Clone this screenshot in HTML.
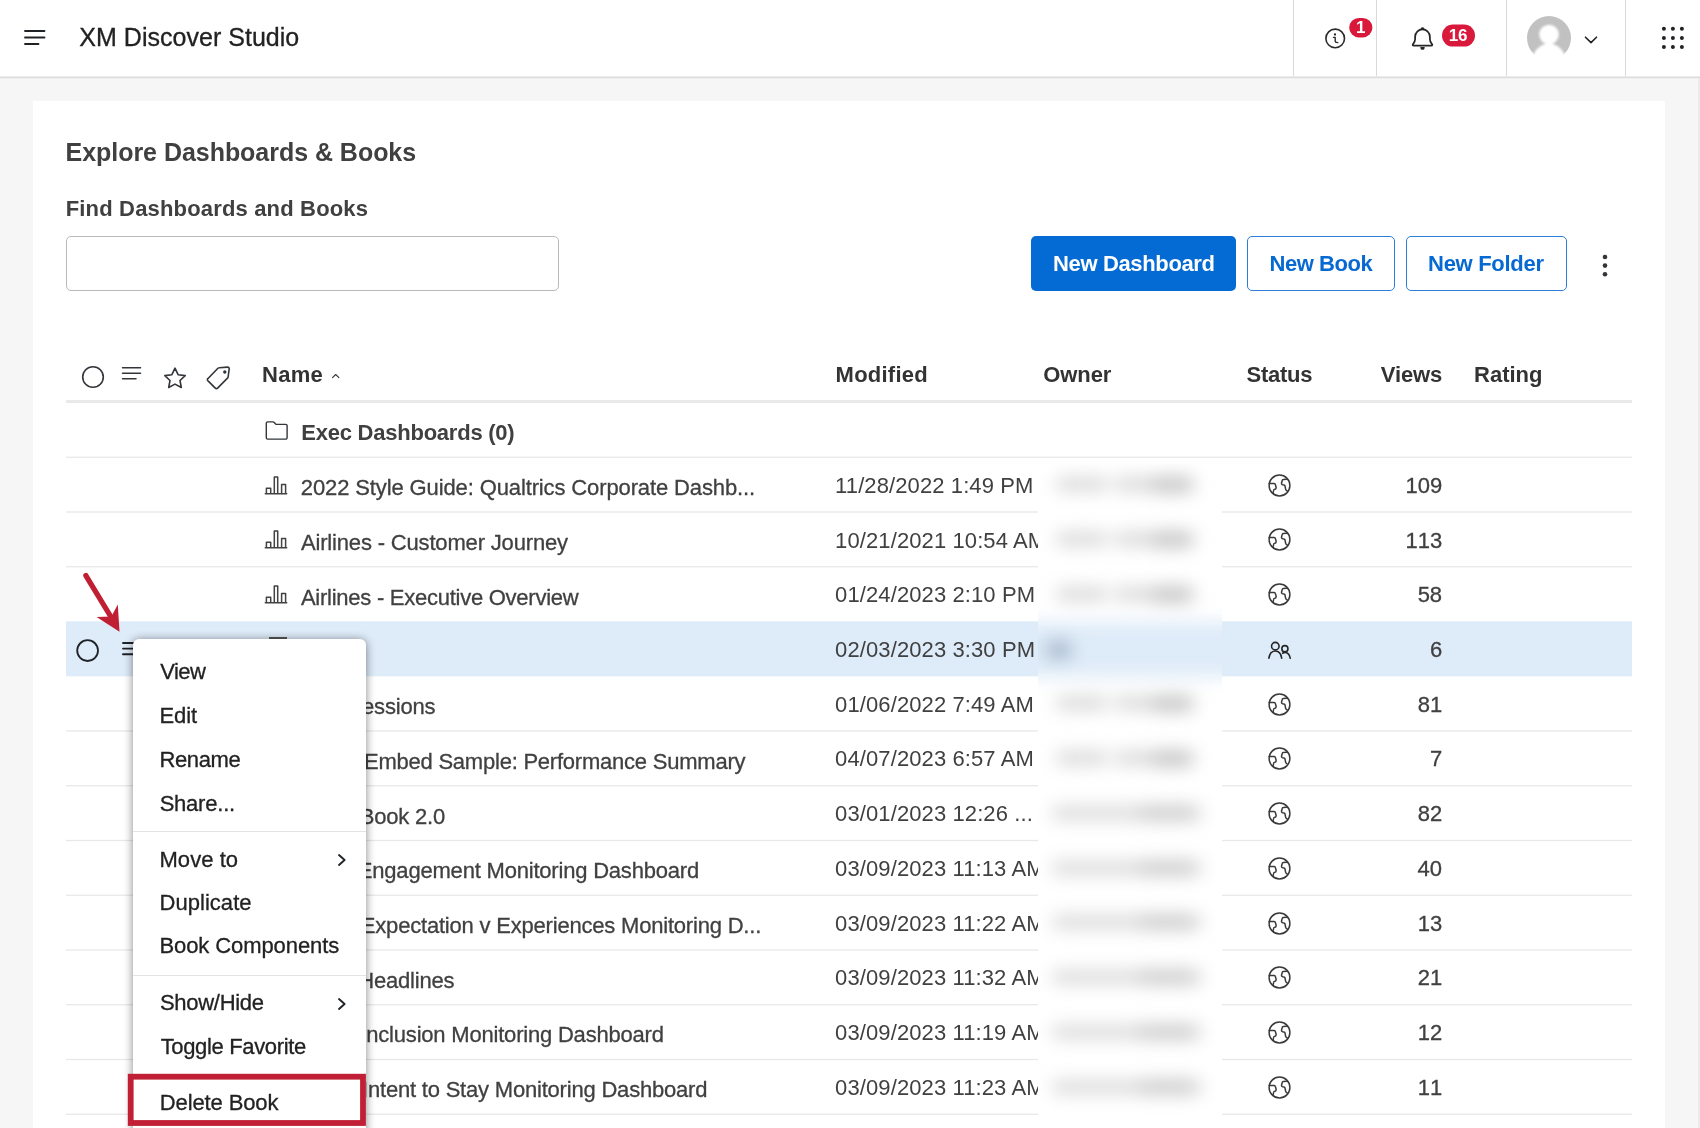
<!DOCTYPE html>
<html>
<head>
<meta charset="utf-8">
<title>XM Discover Studio</title>
<style>
*{box-sizing:border-box;margin:0;padding:0}
html,body{width:1700px;height:1128px;overflow:hidden;background:#f6f6f6;font-family:"Liberation Sans",sans-serif;color:#32363a}
#root{position:absolute;left:0;top:0;width:1700px;height:1128px;overflow:hidden;opacity:.999}
.abs{position:absolute}
.t{position:absolute;white-space:nowrap;line-height:1;color:#404040}
.th{color:#333}
.nm,.mi,.vw,.ap{-webkit-text-stroke:0.3px currentColor}
.b.nm{-webkit-text-stroke:0}
.b{font-weight:bold}
#hdr{position:absolute;left:0;top:0;width:1700px;height:79px;background:#fff;border-bottom:1px solid #f0f0f0}
#hdr:after{content:'';position:absolute;left:0;top:76px;width:1700px;height:2px;background:linear-gradient(#ececec 0,#ececec 50%,#dcdcdc 50%,#dcdcdc 100%)}
.vsep{position:absolute;top:0;width:1px;height:76px;background:#d9d9d9}
#card{position:absolute;left:33px;top:101px;width:1632px;height:1027px;background:#fff}
.rowline{position:absolute;left:66px;width:1566px;height:1px;background:#e7e7e7}
.btn{position:absolute;top:236px;height:55px;border-radius:5px}
.ic{position:absolute;overflow:visible}
</style>
</head>
<body>
<div id="root">
<div id="hdr"></div>
<svg class="ic" style="left:22px;top:28px" width="26" height="20" viewBox="0 0 26 20"><g stroke="#1f2226" stroke-width="1.8" stroke-linecap="round"><line x1="3" y1="3" x2="22.5" y2="3"/><line x1="3" y1="9.5" x2="22.5" y2="9.5"/><line x1="3" y1="16" x2="16.5" y2="16"/></g></svg>

<div class="t ap" id="apptitle" style="left:79.31px;top:25px;font-size:25px;letter-spacing:0.024px;color:#222;">XM Discover Studio</div>
<div class="vsep" style="left:1293px"></div>
<div class="vsep" style="left:1376px"></div>
<div class="vsep" style="left:1506px"></div>
<div class="vsep" style="left:1625px"></div>
<svg class="ic" style="left:1320px;top:14px" width="60" height="40" viewBox="0 0 60 40">
<circle cx="15.200" cy="24.400" r="9.300" fill="none" stroke="#2a2a2a" stroke-width="1.600"/>
<circle cx="15" cy="20.500" r="1.150" fill="#2a2a2a"/>
<path d="M13.500 23.400H15.200V27Q15.300 28.500 17.800 28.600" fill="none" stroke="#2a2a2a" stroke-width="1.400" stroke-linecap="round" stroke-linejoin="round"/>
<rect x="29.200" y="4" width="23.200" height="19.400" rx="9.700" fill="#d9193c"/>
</svg>
<div class="t b" id="b1" style="left:1355.90px;top:19px;font-size:17px;color:#fff;">1</div>
<svg class="ic" style="left:1408px;top:22px" width="70" height="32" viewBox="0 0 70 32">
<path d="M7.100 14.700A7.400 7.300 0 0 1 21.900 14.700V17.200C21.900 19.500 22.700 20.600 24 22.200C24.700 23 24.100 23.600 23.300 23.600H5.700C4.900 23.600 4.300 23 5 22.200C6.300 20.600 7.100 19.500 7.100 17.200Z" fill="none" stroke="#262626" stroke-width="1.750" stroke-linejoin="round"/>
<path d="M12.500 7.300A2 2.100 0 0 1 16.500 7.300Z" fill="#262626"/>
<path d="M12.300 24.900H16.700A2.200 2.900 0 0 1 12.300 24.900Z" fill="#262626"/>
<rect x="34" y="2.600" width="33" height="22" rx="11" fill="#d9193c"/>
</svg>
<div class="t b" id="b16" style="left:1448.70px;top:27px;font-size:17px;letter-spacing:-0.257px;color:#fff;">16</div>
<svg class="ic" style="left:1527px;top:16px" width="44" height="46" viewBox="0 0 44 46">
<defs><clipPath id="avc"><rect x="-2" y="-2" width="48" height="48"/></clipPath><filter id="avb" x="-20%" y="-20%" width="140%" height="140%"><feGaussianBlur stdDeviation="0.9"/></filter></defs>
<circle cx="22" cy="22" r="22" fill="#c1c1c1"/>
<g filter="url(#avb)" clip-path="url(#avc)"><circle cx="22" cy="18.500" r="9.800" fill="#fff"/><ellipse cx="22" cy="46" rx="17" ry="18.500" fill="#fff"/></g>
</svg>
<svg class="ic" style="left:1583px;top:34px" width="16" height="12" viewBox="0 0 16 12"><path d="M2.500 3.200L8 8.600L13.500 3.200" fill="none" stroke="#1f2226" stroke-width="1.600" stroke-linecap="round" stroke-linejoin="round"/></svg>
<svg class="ic" style="left:0;top:0" width="1700" height="78" viewBox="0 0 1700 78" fill="#1f2226"><circle cx="1663.9" cy="28.8" r="2"/><circle cx="1663.9" cy="38" r="2"/><circle cx="1663.9" cy="47.1" r="2"/><circle cx="1672.9" cy="28.8" r="2"/><circle cx="1672.9" cy="38" r="2"/><circle cx="1672.9" cy="47.1" r="2"/><circle cx="1681.9" cy="28.8" r="2"/><circle cx="1681.9" cy="38" r="2"/><circle cx="1681.9" cy="47.1" r="2"/></svg>
<div class="abs" style="left:1698px;top:78px;width:2px;height:1050px;background:#ebebeb"></div>
<div id="card"></div>
<div class="t b" id="h1" style="left:65.52px;top:140px;font-size:25px;letter-spacing:-0.034px;color:#404040;">Explore Dashboards &amp; Books</div>
<div class="t b" id="h2" style="left:65.72px;top:198px;font-size:22px;letter-spacing:0.167px;color:#404040;">Find Dashboards and Books</div>
<div class="abs" style="left:66px;top:236px;width:493px;height:55px;border:1px solid #b9b9b9;border-radius:5px;background:#fff"></div>
<div class="btn" style="left:1031px;width:205px;background:#046ad4"></div>
<div class="btn" style="left:1247px;width:148px;border:1px solid #2b7fd8;background:#fff"></div>
<div class="btn" style="left:1406px;width:161px;border:1px solid #2b7fd8;background:#fff"></div>
<div class="t b" id="bt1" style="left:1053.02px;top:253px;font-size:22px;letter-spacing:-0.358px;color:#fff;">New Dashboard</div>
<div class="t b" id="bt2" style="left:1269.52px;top:253px;font-size:22px;letter-spacing:-0.450px;color:#076ad3;">New Book</div>
<div class="t b" id="bt3" style="left:1428.12px;top:253px;font-size:22px;letter-spacing:-0.305px;color:#076ad3;">New Folder</div>
<svg class="ic" style="left:1600px;top:252px" width="10" height="28" viewBox="0 0 10 28" fill="#32363a"><circle cx="5" cy="5" r="2.300"/><circle cx="5" cy="13.600" r="2.300"/><circle cx="5" cy="22.200" r="2.300"/></svg>
<svg class="ic" style="left:80px;top:364px" width="160" height="28" viewBox="0 0 160 28" fill="none" stroke="#32363a" stroke-width="1.600" stroke-linecap="round" stroke-linejoin="round">
<circle cx="13" cy="13" r="10.300"/>
<g stroke-width="1.500"><line x1="42.500" y1="3.800" x2="60.500" y2="3.800"/><line x1="42.500" y1="9.300" x2="60.500" y2="9.300"/><line x1="42.500" y1="14.800" x2="56" y2="14.800"/></g>
<path d="M95 4.200l3.100 6.500 7.100 0.900-5.200 4.900 1.300 7-6.300-3.400-6.300 3.400 1.300-7-5.200-4.900 7.100-0.900z"/>
<path d="M128.300 14.200l9.600-9.900a2 2 0 0 1 1.400-0.600l8.200-0.600a1.600 1.600 0 0 1 1.700 1.800l-1.100 8.100a2 2 0 0 1-0.600 1.200l-9.900 9.900a1.600 1.600 0 0 1-2.300 0l-7-7a1.600 1.600 0 0 1 0-2.900z"/>
<circle cx="144.800" cy="8" r="0.900" fill="#32363a"/>
</svg>
<div class="t b th" id="hName" style="left:262.02px;top:364px;font-size:22px;letter-spacing:0.271px;">Name</div>
<div class="t b th" id="hMod" style="left:835.58px;top:364px;font-size:22px;letter-spacing:0.241px;">Modified</div>
<div class="t b th" id="hOwn" style="left:1043.14px;top:364px;font-size:22px;letter-spacing:-0.044px;">Owner</div>
<div class="t b th" id="hSta" style="left:1246.54px;top:364px;font-size:22px;letter-spacing:-0.262px;">Status</div>
<div class="t b th" id="hVie" style="left:1380.84px;top:364px;font-size:22px;letter-spacing:-0.167px;">Views</div>
<div class="t b th" id="hRat" style="left:1474.12px;top:364px;font-size:22px;letter-spacing:-0.029px;">Rating</div>
<svg class="ic" style="left:331px;top:372px" width="10" height="8" viewBox="0 0 10 8" fill="none" stroke="#32363a" stroke-width="1.100" stroke-linecap="round" stroke-linejoin="round"><path d="M1.500 5.600L4.700 2.500L7.900 5.600"/></svg>
<div class="abs" style="left:66px;top:400px;width:1566px;height:3px;background:#e9e9e9"></div>
<svg class="ic" style="left:0;top:600px" width="1700" height="100" viewBox="0 600 1700 100"><rect x="66" y="621.350" width="1566" height="54.950" fill="#deebf8"/></svg>
<svg class="ic" style="left:0;top:0" width="1700" height="1128" viewBox="0 0 1700 1128" fill="#e8e8e8"><rect x="66" y="456.60" width="1566" height="1.300"/><rect x="66" y="511.35" width="1566" height="1.300"/><rect x="66" y="566.10" width="1566" height="1.300"/><rect x="66" y="730.35" width="1566" height="1.300"/><rect x="66" y="785.10" width="1566" height="1.300"/><rect x="66" y="839.85" width="1566" height="1.300"/><rect x="66" y="894.60" width="1566" height="1.300"/><rect x="66" y="949.35" width="1566" height="1.300"/><rect x="66" y="1004.10" width="1566" height="1.300"/><rect x="66" y="1058.85" width="1566" height="1.300"/><rect x="66" y="1113.60" width="1566" height="1.300"/></svg>
<div class="t b nm" id="n0" style="left:301.32px;top:422px;font-size:22px;letter-spacing:-0.237px;">Exec Dashboards (0)</div>
<svg class="ic" style="left:263.700px;top:419.45px" width="26" height="22" viewBox="0 0 26 22"><path d="M2.300 4.300a1.400 1.400 0 0 1 1.400-1.400h5.300a1.600 1.600 0 0 1 1.200.5l1.400 1.500a1.600 1.600 0 0 0 1.200.5h8.900a1.400 1.400 0 0 1 1.400 1.400v11.900a1.400 1.400 0 0 1-1.400 1.400h-18a1.400 1.400 0 0 1-1.400-1.400z" fill="none" stroke="#32363a" stroke-width="1.400" stroke-linejoin="round"/></svg>
<div class="t nm" id="n1" style="left:300.87px;top:477px;font-size:22px;letter-spacing:-0.122px;">2022 Style Guide: Qualtrics Corporate Dashb...</div>
<svg class="ic" style="left:263.900px;top:475.70px" width="24" height="20" viewBox="0 0 24 20"><path d="M1.300 17.800H22.700M2.400 17.800V12.300H6.700V17.800M10.300 17.800V1H13.700V17.800M17.600 17.800V8.600H21.600V17.800" fill="none" stroke="#424242" stroke-width="1.500" stroke-linejoin="round" stroke-linecap="round"/></svg>
<div class="t dt" id="d1" style="left:835.12px;top:475px;font-size:22px;letter-spacing:0.102px;">11/28/2022 1:49 PM</div>
<div class="t vw" id="v1" style="left:1405.47px;top:475px;font-size:22px;font-kerning:none;">109</div>
<svg class="ic" style="left:1268.200px;top:473.70px" width="23" height="23" viewBox="0 0 23 23"><circle cx="11.500" cy="11.500" r="10.400" fill="none" stroke="#3a3a3a" stroke-width="1.500"/><path d="M1.200 9.500H6.200Q7.200 9.500 7.400 10.500L8.100 13.300Q8.300 14.900 7 15.200L6.300 15.400Q5.800 15.500 5.700 16.200L5.100 18.900M18.600 5.300L15.200 5.500Q14.400 5.600 14.200 6.500L13.500 9.200Q13.400 10.500 14.600 10.700L16 10.900Q16.800 11 17 12L17.600 15.200Q17.800 16.200 19 16.900" fill="none" stroke="#3a3a3a" stroke-width="1.500" stroke-linecap="round" stroke-linejoin="round"/></svg>
<div class="t nm" id="n2" style="left:300.93px;top:532px;font-size:22px;letter-spacing:-0.165px;">Airlines - Customer Journey</div>
<svg class="ic" style="left:263.900px;top:530.45px" width="24" height="20" viewBox="0 0 24 20"><path d="M1.300 17.800H22.700M2.400 17.800V12.300H6.700V17.800M10.300 17.800V1H13.700V17.800M17.600 17.800V8.600H21.600V17.800" fill="none" stroke="#424242" stroke-width="1.500" stroke-linejoin="round" stroke-linecap="round"/></svg>
<div class="t dt" id="d2" style="left:835.12px;top:530px;font-size:22px;letter-spacing:0.102px;">10/21/2021 10:54 AM</div>
<div class="t vw" id="v2" style="left:1405.41px;top:530px;font-size:22px;font-kerning:none;">113</div>
<svg class="ic" style="left:1268.200px;top:528.45px" width="23" height="23" viewBox="0 0 23 23"><circle cx="11.500" cy="11.500" r="10.400" fill="none" stroke="#3a3a3a" stroke-width="1.500"/><path d="M1.200 9.500H6.200Q7.200 9.500 7.400 10.500L8.100 13.300Q8.300 14.900 7 15.200L6.300 15.400Q5.800 15.500 5.700 16.200L5.100 18.900M18.600 5.300L15.200 5.500Q14.400 5.600 14.200 6.500L13.500 9.200Q13.400 10.500 14.600 10.700L16 10.900Q16.800 11 17 12L17.600 15.200Q17.800 16.200 19 16.900" fill="none" stroke="#3a3a3a" stroke-width="1.500" stroke-linecap="round" stroke-linejoin="round"/></svg>
<div class="t nm" id="n3" style="left:300.93px;top:587px;font-size:22px;letter-spacing:-0.254px;">Airlines - Executive Overview</div>
<svg class="ic" style="left:263.900px;top:585.20px" width="24" height="20" viewBox="0 0 24 20"><path d="M1.300 17.800H22.700M2.400 17.800V12.300H6.700V17.800M10.300 17.800V1H13.700V17.800M17.600 17.800V8.600H21.600V17.800" fill="none" stroke="#424242" stroke-width="1.500" stroke-linejoin="round" stroke-linecap="round"/></svg>
<div class="t dt" id="d3" style="left:835.12px;top:584px;font-size:22px;letter-spacing:0.102px;">01/24/2023 2:10 PM</div>
<div class="t vw" id="v3" style="left:1417.63px;top:584px;font-size:22px;font-kerning:none;">58</div>
<svg class="ic" style="left:1268.200px;top:583.20px" width="23" height="23" viewBox="0 0 23 23"><circle cx="11.500" cy="11.500" r="10.400" fill="none" stroke="#3a3a3a" stroke-width="1.500"/><path d="M1.200 9.500H6.200Q7.200 9.500 7.400 10.500L8.100 13.300Q8.300 14.900 7 15.200L6.300 15.400Q5.800 15.500 5.700 16.200L5.100 18.900M18.600 5.300L15.200 5.500Q14.400 5.600 14.200 6.500L13.500 9.200Q13.400 10.500 14.600 10.700L16 10.900Q16.800 11 17 12L17.600 15.200Q17.800 16.200 19 16.900" fill="none" stroke="#3a3a3a" stroke-width="1.500" stroke-linecap="round" stroke-linejoin="round"/></svg>
<div class="t dt" id="d4" style="left:835.12px;top:639px;font-size:22px;letter-spacing:0.102px;">02/03/2023 3:30 PM</div>
<div class="t vw" id="v4" style="left:1429.90px;top:639px;font-size:22px;font-kerning:none;">6</div>
<svg class="ic" style="left:1268px;top:641.55px" width="24" height="18" viewBox="0 0 24 18"><g fill="none" stroke="#262626" stroke-width="1.600" stroke-linecap="round"><circle cx="7.300" cy="4.150" r="3.750"/><path d="M0.900 16.250C1.600 11.500 4.400 9.050 7.300 9.050S13 11.500 13.700 16.250"/><circle cx="16.900" cy="6.650" r="3.050"/><path d="M14.600 11.250C15.500 10.600 16.400 10.400 17.300 10.450C20 10.600 21.700 13 22.200 16.250"/></g></svg>
<div class="t nm" id="n5" style="left:318.86px;top:696px;font-size:22px;letter-spacing:-0.200px;">Impressions</div>
<div class="t dt" id="d5" style="left:835.12px;top:694px;font-size:22px;letter-spacing:0.102px;">01/06/2022 7:49 AM</div>
<div class="t vw" id="v5" style="left:1417.70px;top:694px;font-size:22px;font-kerning:none;">81</div>
<svg class="ic" style="left:1268.200px;top:692.70px" width="23" height="23" viewBox="0 0 23 23"><circle cx="11.500" cy="11.500" r="10.400" fill="none" stroke="#3a3a3a" stroke-width="1.500"/><path d="M1.200 9.500H6.200Q7.200 9.500 7.400 10.500L8.100 13.300Q8.300 14.900 7 15.200L6.300 15.400Q5.800 15.500 5.700 16.200L5.100 18.900M18.600 5.300L15.200 5.500Q14.400 5.600 14.200 6.500L13.500 9.200Q13.400 10.500 14.600 10.700L16 10.900Q16.800 11 17 12L17.600 15.200Q17.800 16.200 19 16.900" fill="none" stroke="#3a3a3a" stroke-width="1.500" stroke-linecap="round" stroke-linejoin="round"/></svg>
<div class="t nm" id="n6" style="left:363.98px;top:751px;font-size:22px;letter-spacing:-0.228px;">Embed Sample: Performance Summary</div>
<div class="t dt" id="d6" style="left:835.12px;top:748px;font-size:22px;letter-spacing:0.102px;">04/07/2023 6:57 AM</div>
<div class="t vw" id="v6" style="left:1429.98px;top:748px;font-size:22px;font-kerning:none;">7</div>
<svg class="ic" style="left:1268.200px;top:747.45px" width="23" height="23" viewBox="0 0 23 23"><circle cx="11.500" cy="11.500" r="10.400" fill="none" stroke="#3a3a3a" stroke-width="1.500"/><path d="M1.200 9.500H6.200Q7.200 9.500 7.400 10.500L8.100 13.300Q8.300 14.900 7 15.200L6.300 15.400Q5.800 15.500 5.700 16.200L5.100 18.900M18.600 5.300L15.200 5.500Q14.400 5.600 14.200 6.500L13.500 9.200Q13.400 10.500 14.600 10.700L16 10.900Q16.800 11 17 12L17.600 15.200Q17.800 16.200 19 16.900" fill="none" stroke="#3a3a3a" stroke-width="1.500" stroke-linecap="round" stroke-linejoin="round"/></svg>
<div class="t nm" id="n7" style="left:359.69px;top:806px;font-size:22px;letter-spacing:-0.200px;">Book 2.0</div>
<div class="t dt" id="d7" style="left:835.12px;top:803px;font-size:22px;letter-spacing:0.102px;">03/01/2023 12:26 ...</div>
<div class="t vw" id="v7" style="left:1417.73px;top:803px;font-size:22px;font-kerning:none;">82</div>
<svg class="ic" style="left:1268.200px;top:802.20px" width="23" height="23" viewBox="0 0 23 23"><circle cx="11.500" cy="11.500" r="10.400" fill="none" stroke="#3a3a3a" stroke-width="1.500"/><path d="M1.200 9.500H6.200Q7.200 9.500 7.400 10.500L8.100 13.300Q8.300 14.900 7 15.200L6.300 15.400Q5.800 15.500 5.700 16.200L5.100 18.900M18.600 5.300L15.200 5.500Q14.400 5.600 14.200 6.500L13.500 9.200Q13.400 10.500 14.600 10.700L16 10.900Q16.800 11 17 12L17.600 15.200Q17.800 16.200 19 16.900" fill="none" stroke="#3a3a3a" stroke-width="1.500" stroke-linecap="round" stroke-linejoin="round"/></svg>
<div class="t nm" id="n8" style="left:357.84px;top:860px;font-size:22px;letter-spacing:-0.200px;">Engagement Monitoring Dashboard</div>
<div class="t dt" id="d8" style="left:835.12px;top:858px;font-size:22px;letter-spacing:0.102px;">03/09/2023 11:13 AM</div>
<div class="t vw" id="v8" style="left:1417.54px;top:858px;font-size:22px;font-kerning:none;">40</div>
<svg class="ic" style="left:1268.200px;top:856.95px" width="23" height="23" viewBox="0 0 23 23"><circle cx="11.500" cy="11.500" r="10.400" fill="none" stroke="#3a3a3a" stroke-width="1.500"/><path d="M1.200 9.500H6.200Q7.200 9.500 7.400 10.500L8.100 13.300Q8.300 14.900 7 15.200L6.300 15.400Q5.800 15.500 5.700 16.200L5.100 18.900M18.600 5.300L15.200 5.500Q14.400 5.600 14.200 6.500L13.500 9.200Q13.400 10.500 14.600 10.700L16 10.900Q16.800 11 17 12L17.600 15.200Q17.800 16.200 19 16.900" fill="none" stroke="#3a3a3a" stroke-width="1.500" stroke-linecap="round" stroke-linejoin="round"/></svg>
<div class="t nm" id="n9" style="left:360.85px;top:915px;font-size:22px;letter-spacing:-0.200px;">Expectation v Experiences Monitoring D...</div>
<div class="t dt" id="d9" style="left:835.12px;top:913px;font-size:22px;letter-spacing:0.102px;">03/09/2023 11:22 AM</div>
<div class="t vw" id="v9" style="left:1417.65px;top:913px;font-size:22px;font-kerning:none;">13</div>
<svg class="ic" style="left:1268.200px;top:911.70px" width="23" height="23" viewBox="0 0 23 23"><circle cx="11.500" cy="11.500" r="10.400" fill="none" stroke="#3a3a3a" stroke-width="1.500"/><path d="M1.200 9.500H6.200Q7.200 9.500 7.400 10.500L8.100 13.300Q8.300 14.900 7 15.200L6.300 15.400Q5.800 15.500 5.700 16.200L5.100 18.900M18.600 5.300L15.200 5.500Q14.400 5.600 14.200 6.500L13.500 9.200Q13.400 10.500 14.600 10.700L16 10.900Q16.800 11 17 12L17.600 15.200Q17.800 16.200 19 16.900" fill="none" stroke="#3a3a3a" stroke-width="1.500" stroke-linecap="round" stroke-linejoin="round"/></svg>
<div class="t nm" id="n10" style="left:358.31px;top:970px;font-size:22px;letter-spacing:-0.200px;">Headlines</div>
<div class="t dt" id="d10" style="left:835.12px;top:967px;font-size:22px;letter-spacing:0.102px;">03/09/2023 11:32 AM</div>
<div class="t vw" id="v10" style="left:1417.70px;top:967px;font-size:22px;font-kerning:none;">21</div>
<svg class="ic" style="left:1268.200px;top:966.45px" width="23" height="23" viewBox="0 0 23 23"><circle cx="11.500" cy="11.500" r="10.400" fill="none" stroke="#3a3a3a" stroke-width="1.500"/><path d="M1.200 9.500H6.200Q7.200 9.500 7.400 10.500L8.100 13.300Q8.300 14.900 7 15.200L6.300 15.400Q5.800 15.500 5.700 16.200L5.100 18.900M18.600 5.300L15.200 5.500Q14.400 5.600 14.200 6.500L13.500 9.200Q13.400 10.500 14.600 10.700L16 10.900Q16.800 11 17 12L17.600 15.200Q17.800 16.200 19 16.900" fill="none" stroke="#3a3a3a" stroke-width="1.500" stroke-linecap="round" stroke-linejoin="round"/></svg>
<div class="t nm" id="n11" style="left:360.37px;top:1024px;font-size:22px;letter-spacing:-0.200px;">Inclusion Monitoring Dashboard</div>
<div class="t dt" id="d11" style="left:835.12px;top:1022px;font-size:22px;letter-spacing:0.102px;">03/09/2023 11:19 AM</div>
<div class="t vw" id="v11" style="left:1417.73px;top:1022px;font-size:22px;font-kerning:none;">12</div>
<svg class="ic" style="left:1268.200px;top:1021.20px" width="23" height="23" viewBox="0 0 23 23"><circle cx="11.500" cy="11.500" r="10.400" fill="none" stroke="#3a3a3a" stroke-width="1.500"/><path d="M1.200 9.500H6.200Q7.200 9.500 7.400 10.500L8.100 13.300Q8.300 14.900 7 15.200L6.300 15.400Q5.800 15.500 5.700 16.200L5.100 18.900M18.600 5.300L15.200 5.500Q14.400 5.600 14.200 6.500L13.500 9.200Q13.400 10.500 14.600 10.700L16 10.900Q16.800 11 17 12L17.600 15.200Q17.800 16.200 19 16.900" fill="none" stroke="#3a3a3a" stroke-width="1.500" stroke-linecap="round" stroke-linejoin="round"/></svg>
<div class="t nm" id="n12" style="left:362.04px;top:1079px;font-size:22px;letter-spacing:-0.200px;">Intent to Stay Monitoring Dashboard</div>
<div class="t dt" id="d12" style="left:835.12px;top:1077px;font-size:22px;letter-spacing:0.102px;">03/09/2023 11:23 AM</div>
<div class="t vw" id="v12" style="left:1417.70px;top:1077px;font-size:22px;font-kerning:none;">11</div>
<svg class="ic" style="left:1268.200px;top:1075.95px" width="23" height="23" viewBox="0 0 23 23"><circle cx="11.500" cy="11.500" r="10.400" fill="none" stroke="#3a3a3a" stroke-width="1.500"/><path d="M1.200 9.500H6.200Q7.200 9.500 7.400 10.500L8.100 13.300Q8.300 14.900 7 15.200L6.300 15.400Q5.800 15.500 5.700 16.200L5.100 18.900M18.600 5.300L15.200 5.500Q14.400 5.600 14.200 6.500L13.500 9.200Q13.400 10.500 14.600 10.700L16 10.900Q16.800 11 17 12L17.600 15.200Q17.800 16.200 19 16.900" fill="none" stroke="#3a3a3a" stroke-width="1.500" stroke-linecap="round" stroke-linejoin="round"/></svg>
<svg class="ic" style="left:74px;top:636.500px" width="28" height="28" viewBox="0 0 28 28"><circle cx="13.600" cy="13.600" r="10.400" fill="none" stroke="#1f2226" stroke-width="1.800"/></svg>
<svg class="ic" style="left:120px;top:640px" width="24" height="18" viewBox="0 0 24 18" stroke="#1f2226" stroke-width="1.900" stroke-linecap="round"><line x1="3" y1="3" x2="20" y2="3"/><line x1="3" y1="8.600" x2="20" y2="8.600"/><line x1="3" y1="14.200" x2="15" y2="14.200"/></svg>
<div class="abs" style="left:268.500px;top:637.400px;width:18.200px;height:1.300px;background:#555"></div>
<div class="abs" id="blur" style="left:1038px;top:464px;width:184px;height:664px;overflow:hidden;background:#fff"><div style="position:absolute;left:-30px;top:-30px;width:244px;height:730px;filter:blur(9px)"><div style="position:absolute;left:0;top:188px;width:244px;height:55px;background:#deebf8"></div><div style="position:absolute;left:30px;top:30px;width:184px;height:700px"><div style="position:absolute;left:18px;top:14.4px;width:52px;height:12px;background:#d2d2d2;border-radius:6px"></div><div style="position:absolute;left:76px;top:14.4px;width:40px;height:12px;background:#d2d2d2;border-radius:6px"></div><div style="position:absolute;left:112px;top:13.4px;width:44px;height:15px;background:#c0c0c0;border-radius:7px"></div><div style="position:absolute;left:18px;top:69.1px;width:52px;height:12px;background:#d2d2d2;border-radius:6px"></div><div style="position:absolute;left:76px;top:69.1px;width:40px;height:12px;background:#d2d2d2;border-radius:6px"></div><div style="position:absolute;left:112px;top:68.1px;width:44px;height:15px;background:#c0c0c0;border-radius:7px"></div><div style="position:absolute;left:18px;top:123.9px;width:52px;height:12px;background:#d2d2d2;border-radius:6px"></div><div style="position:absolute;left:76px;top:123.9px;width:40px;height:12px;background:#d2d2d2;border-radius:6px"></div><div style="position:absolute;left:112px;top:122.9px;width:44px;height:15px;background:#c0c0c0;border-radius:7px"></div><div style="position:absolute;left:8px;top:176.6px;width:26px;height:18px;background:#a3b4c8;border-radius:9px"></div><div style="position:absolute;left:18px;top:233.4px;width:52px;height:12px;background:#d2d2d2;border-radius:6px"></div><div style="position:absolute;left:76px;top:233.4px;width:40px;height:12px;background:#d2d2d2;border-radius:6px"></div><div style="position:absolute;left:112px;top:232.4px;width:44px;height:15px;background:#c0c0c0;border-radius:7px"></div><div style="position:absolute;left:18px;top:288.1px;width:52px;height:12px;background:#d2d2d2;border-radius:6px"></div><div style="position:absolute;left:76px;top:288.1px;width:40px;height:12px;background:#d2d2d2;border-radius:6px"></div><div style="position:absolute;left:112px;top:287.1px;width:44px;height:15px;background:#c0c0c0;border-radius:7px"></div><div style="position:absolute;left:14px;top:342.9px;width:150px;height:12px;background:#d4d4d4;border-radius:6px"></div><div style="position:absolute;left:100px;top:341.9px;width:58px;height:14px;background:#c6c6c6;border-radius:7px"></div><div style="position:absolute;left:14px;top:397.6px;width:150px;height:12px;background:#d4d4d4;border-radius:6px"></div><div style="position:absolute;left:100px;top:396.6px;width:58px;height:14px;background:#c6c6c6;border-radius:7px"></div><div style="position:absolute;left:14px;top:452.4px;width:150px;height:12px;background:#d4d4d4;border-radius:6px"></div><div style="position:absolute;left:100px;top:451.4px;width:58px;height:14px;background:#c6c6c6;border-radius:7px"></div><div style="position:absolute;left:14px;top:507.1px;width:150px;height:12px;background:#d4d4d4;border-radius:6px"></div><div style="position:absolute;left:100px;top:506.1px;width:58px;height:14px;background:#c6c6c6;border-radius:7px"></div><div style="position:absolute;left:14px;top:561.9px;width:150px;height:12px;background:#d4d4d4;border-radius:6px"></div><div style="position:absolute;left:100px;top:560.9px;width:58px;height:14px;background:#c6c6c6;border-radius:7px"></div><div style="position:absolute;left:14px;top:616.7px;width:150px;height:12px;background:#d4d4d4;border-radius:6px"></div><div style="position:absolute;left:100px;top:615.7px;width:58px;height:14px;background:#c6c6c6;border-radius:7px"></div></div></div></div>
<svg class="ic" style="left:70px;top:560px" width="70" height="80" viewBox="0 0 70 80"><line x1="15.900" y1="15.600" x2="41" y2="57" stroke="#c01f33" stroke-width="5.300" stroke-linecap="round"/><path d="M49.500 71.700L26.600 57.100L41.400 56.600L47.800 44.400z" fill="#c01f33"/></svg>
<div class="abs" id="menu" style="left:133px;top:639px;width:233px;height:500px;background:#fff;border-radius:6px 6px 0 0;box-shadow:0 1px 10px rgba(0,0,0,.48)"></div>
<div class="abs" style="left:133px;top:831px;width:233px;height:1px;background:#e3e3e3"></div>
<div class="abs" style="left:133px;top:974.500px;width:233px;height:1px;background:#e3e3e3"></div>
<div class="t mi" id="m0" style="left:160.23px;top:661px;font-size:22px;letter-spacing:-0.573px;color:#222;">View</div>
<div class="t mi" id="m1" style="left:159.48px;top:705px;font-size:22px;letter-spacing:-0.118px;color:#222;">Edit</div>
<div class="t mi" id="m2" style="left:159.48px;top:749px;font-size:22px;letter-spacing:-0.391px;color:#222;">Rename</div>
<div class="t mi" id="m3" style="left:159.63px;top:793px;font-size:22px;letter-spacing:-0.219px;color:#222;">Share...</div>
<div class="t mi" id="m4" style="left:159.48px;top:849px;font-size:22px;letter-spacing:0.061px;color:#222;">Move to</div>
<div class="t mi" id="m5" style="left:159.48px;top:892px;font-size:22px;letter-spacing:0.045px;color:#222;">Duplicate</div>
<div class="t mi" id="m6" style="left:159.48px;top:935px;font-size:22px;letter-spacing:-0.088px;color:#222;">Book Components</div>
<div class="t mi" id="m7" style="left:159.93px;top:992px;font-size:22px;letter-spacing:-0.281px;color:#222;">Show/Hide</div>
<div class="t mi" id="m8" style="left:160.69px;top:1036px;font-size:22px;letter-spacing:-0.350px;color:#222;">Toggle Favorite</div>
<div class="t mi" id="m9" style="left:159.78px;top:1092px;font-size:22px;letter-spacing:-0.118px;color:#222;">Delete Book</div>
<svg class="ic" style="left:336px;top:851.5px" width="12" height="16" viewBox="0 0 12 16"><path d="M3 3.050L8.600 8L3 12.950" fill="none" stroke="#1f2226" stroke-width="1.900" stroke-linecap="round" stroke-linejoin="round"/></svg>
<svg class="ic" style="left:336px;top:995.6px" width="12" height="16" viewBox="0 0 12 16"><path d="M3 3.050L8.600 8L3 12.950" fill="none" stroke="#1f2226" stroke-width="1.900" stroke-linecap="round" stroke-linejoin="round"/></svg>
<svg class="ic" style="left:120px;top:1066px" width="260" height="62" viewBox="0 0 260 62"><rect x="10.700" y="10.700" width="232.300" height="46.300" fill="none" stroke="#c01f35" stroke-width="5.800"/></svg>
</div>
</body>
</html>
